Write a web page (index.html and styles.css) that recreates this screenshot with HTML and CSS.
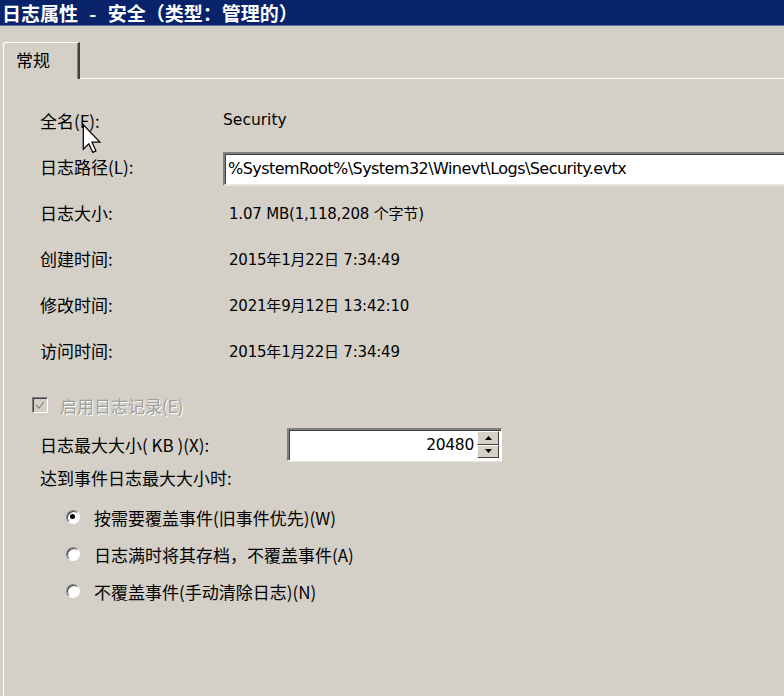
FILE: index.html
```html
<!DOCTYPE html>
<html lang="zh-CN">
<head>
<meta charset="utf-8">
<title>日志属性 - 安全 (类型: 管理的)</title>
<link rel="stylesheet" href="styles.css">
</head>
<body>
<div class="window">
  <div class="titlebar">日志属性 - 安全（类型：管理的）</div>
  <div class="tabstrip">
    <div class="tab">常规</div>
  </div>
  <div class="panel">
    <div class="info">
      <div class="label">全名(F):</div>
      <div class="value v-name">Security</div>
      <div class="label">日志路径(L):</div>
      <div class="value"><div class="pathbox">%SystemRoot%\System32\Winevt\Logs\Security.evtx</div></div>
      <div class="label">日志大小:</div>
      <div class="value v-data">1.07 MB(1,118,208 个字节)</div>
      <div class="label">创建时间:</div>
      <div class="value v-data">2015年1月22日 7:34:49</div>
      <div class="label">修改时间:</div>
      <div class="value v-data">2021年9月12日 13:42:10</div>
      <div class="label">访问时间:</div>
      <div class="value v-data">2015年1月22日 7:34:49</div>
    </div>

    <div class="check-row">
      <span class="checkbox"><svg width="10" height="10" viewBox="0 0 10 10"><path d="M1 4 L4 7 L9 1 L9 3 L4 9 L1 6 Z" fill="#8c8a84"/></svg></span>
      <span class="disabled-text">启用日志记录(E)</span>
    </div>

    <div class="size-row">
      <span class="label">日志最大大小( KB )(X):</span>
      <div class="spin">
        <span class="spin-value">20480</span>
        <div class="spin-btns">
          <div class="spin-btn"><svg width="7" height="4" viewBox="0 0 7 4"><path d="M3.5 0 L7 4 L0 4 Z" fill="#000"/></svg></div>
          <div class="spin-btn"><svg width="7" height="4" viewBox="0 0 7 4"><path d="M0 0 L7 0 L3.5 4 Z" fill="#000"/></svg></div>
        </div>
      </div>
    </div>

    <div class="label reach">达到事件日志最大大小时:</div>

    <div class="radios">
      <div class="radio-row"><span class="radio checked"></span><span>按需要覆盖事件(旧事件优先)(W)</span></div>
      <div class="radio-row"><span class="radio"></span><span>日志满时将其存档，不覆盖事件(A)</span></div>
      <div class="radio-row"><span class="radio"></span><span>不覆盖事件(手动清除日志)(N)</span></div>
    </div>
  </div>
  <svg class="cursor" width="20" height="30" viewBox="0 0 12 19">
    <path d="M0.5 0.5 L0.5 16 L4 12.5 L6.5 18 L8.5 17 L6 11.5 L11 11.5 Z" fill="#fff" stroke="#000" stroke-width="0.8" stroke-linejoin="miter"/>
  </svg>
</div>
</body>
</html>
```

FILE: styles.css
```css
* { box-sizing: border-box; }
html, body {
  margin: 0;
  padding: 0;
  width: 784px;
  height: 696px;
  overflow: hidden;
  background: #d4d0c8;
}
.window {
  position: relative;
  width: 784px;
  height: 696px;
  background: #d4d0c8;
  font-family: "DejaVu Sans", "Noto Sans CJK SC", sans-serif;
  font-size: 16px;
  color: #000;
}
.titlebar {
  height: 26px;
  background: #08236a;
  border-bottom: 1px solid #5a6e9a;
  color: #fff;
  font-family: "Noto Sans CJK SC", sans-serif;
  font-weight: bold;
  font-size: 19px;
  line-height: 25px;
  padding-left: 2px;
  white-space: pre;
  word-spacing: 7px;
}
.tabstrip {
  height: 52px;
  padding-top: 15px;
  padding-left: 3px;
  display: flex;
  align-items: flex-end;
}
.tab {
  width: 77px;
  height: 37px;
  border-top: 1px solid #fff;
  border-left: 1px solid #fff;
  border-right: 2px solid #404040;
  border-top-left-radius: 3px;
  box-shadow: inset -1px 0 0 #808080;
  font-family: "Noto Sans CJK SC", sans-serif;
  font-size: 17px;
  padding-left: 12px;
  line-height: 34px;
  position: relative;
  z-index: 1;
  background: #d4d0c8;
  margin-bottom: -1px;
}
.panel {
  margin-left: 3px;
  border-top: 1px solid #fff;
  border-left: 1px solid #fff;
  height: 618px;
  padding-left: 36px;
  padding-top: 18px;
}
.info {
  display: grid;
  grid-template-columns: 183px 1fr;
  grid-auto-rows: 46px;
  align-items: center;
}
.label {
  font-family: "Noto Sans CJK SC", sans-serif;
  font-size: 17px;
  white-space: nowrap;
}
.value {
  white-space: nowrap;
  font-family: "DejaVu Sans", "Noto Sans CJK SC", sans-serif;
  font-size: 15.5px;
}
.v-data {
  padding-left: 6px;
  font-size: 15px;
}
.v-data, .v-data * { letter-spacing: -0.2px; }
.pathbox {
  height: 34px;
  margin-top: 6px;
  margin-right: -20px;
  background: #fff;
  border-top: 2px solid #808080;
  border-left: 2px solid #808080;
  box-shadow: inset 1px 1px 0 #404040;
  border-bottom: 2px solid #e8e6e0;
  padding-left: 3px;
  line-height: 30px;
  font-size: 16px;
  letter-spacing: -0.55px;
}
.check-row {
  margin-top: 22px;
  margin-left: -8px;
  display: flex;
  align-items: center;
  gap: 12px;
  height: 20px;
}
.checkbox {
  width: 16px;
  height: 16px;
  border-top: 1px solid #808080;
  border-left: 1px solid #808080;
  border-right: 1px solid #fff;
  border-bottom: 1px solid #fff;
  box-shadow: inset 1px 1px 0 #404040, inset -1px -1px 0 #d4d0c8;
  background: #d4d0c8;
  display: flex;
  align-items: center;
  justify-content: center;
}
.disabled-text {
  font-family: "Noto Sans CJK SC", sans-serif;
  font-size: 17px;
  color: #a09e98;
  text-shadow: 1px 1px 0 #fff;
}
.size-row {
  margin-top: 13px;
  display: flex;
  align-items: center;
  height: 32px;
}
.size-row .label { width: 247px; }
.spin {
  width: 215px;
  height: 33px;
  background: #fff;
  border-top: 2px solid #808080;
  border-left: 2px solid #808080;
  border-bottom: 1px solid #fff;
  border-right: 1px solid #fff;
  box-shadow: inset 1px 1px 0 #404040, 0 1px 0 #e8e6e0;
  display: flex;
  align-items: center;
  justify-content: flex-end;
  padding-right: 2px;
  gap: 3px;
}
.spin-value {
  font-family: "DejaVu Sans", sans-serif;
  font-size: 15.5px;
  letter-spacing: -0.3px;
}
.spin-btns {
  display: flex;
  flex-direction: column;
  width: 22px;
  height: 27px;
}
.spin-btn {
  flex: 1;
  background: #d4d0c8;
  border-top: 1px solid #fff;
  border-left: 1px solid #fff;
  border-right: 1px solid #404040;
  border-bottom: 1px solid #404040;
  display: flex;
  align-items: center;
  justify-content: center;
}
.reach {
  margin-top: 4px;
  height: 28px;
  line-height: 28px;
}
.radios {
  margin-top: 12px;
  padding-left: 26px;
  display: flex;
  flex-direction: column;
  gap: 11px;
}
.radio-row {
  display: flex;
  align-items: center;
  gap: 14px;
  height: 26px;
  font-family: "Noto Sans CJK SC", sans-serif;
  font-size: 17px;
  white-space: nowrap;
}
.radio {
  width: 14px;
  height: 14px;
  border-radius: 50%;
  background: #fff;
  border: 1px solid;
  border-color: #808080 #fff #fff #808080;
  box-shadow: inset 1px 1px 0 #404040;
  position: relative;
}
.radio.checked::after {
  content: "";
  position: absolute;
  left: 3px;
  top: 3px;
  width: 5px;
  height: 5px;
  border-radius: 50%;
  background: #000;
}
.cursor {
  position: absolute;
  left: 82px;
  top: 124px;
}
```
